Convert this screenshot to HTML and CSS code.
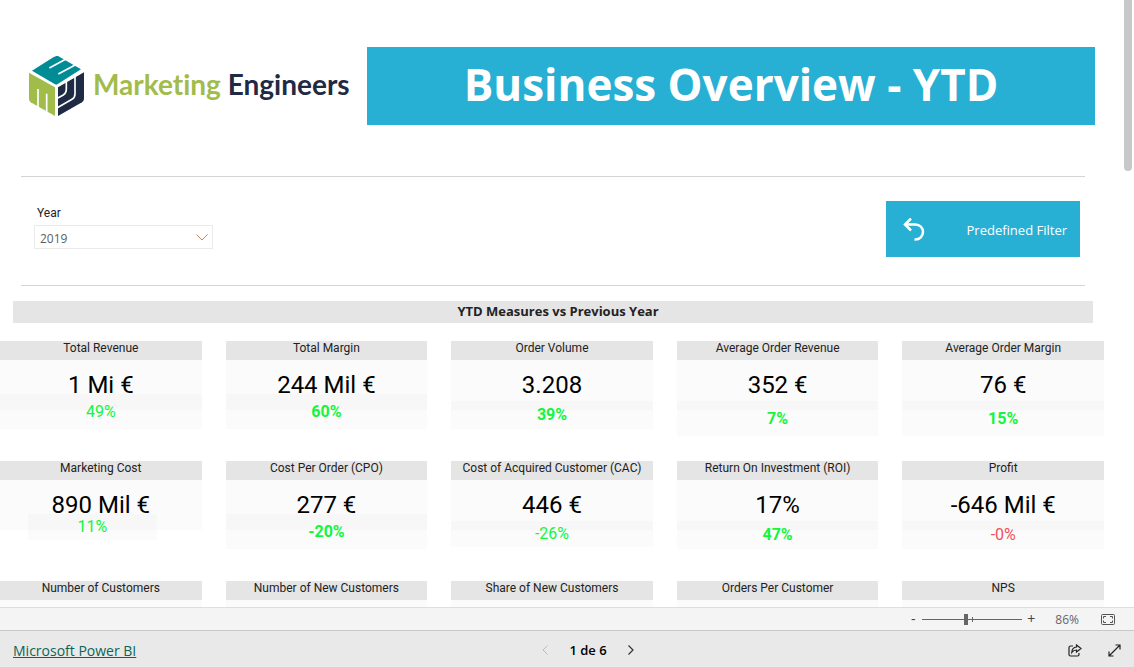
FILE: index.html
```html
<!DOCTYPE html>
<html lang="en">
<head>
<meta charset="utf-8">
<title>Business Overview - YTD</title>
<link rel="stylesheet" href="styles.css">
</head>
<body>
<main class="report">
  <header class="masthead">
    <div class="brand">
      <svg class="brand-mark" viewBox="27 17 165 180" aria-hidden="true">
        <path fill="#008c95" d="M109 17Q113 16 118 19L183 57L112 102Q109 104 105 102L36 61L100 21Z"/>
        <path fill="#a2bc4b" d="M27 67L105 111V197L32 156Q27 152 27 146Z"/>
        <path fill="#1f2a44" d="M192 66L114 111V197L186 156Q192 152 192 146Z"/>
        <g fill="none" stroke="#fff" stroke-width="5">
          <path d="M88 53L145 22M115 71L172 40"/>
          <path d="M54 116V176M80 130V190"/>
          <path d="M139 94V117Q139 129 130 134L112 144M165 79V130Q165 142 156 147L112 172"/>
        </g>
      </svg>
      <div class="brand-name"><span class="brand-first">Marketing</span> Engineers</div>
    </div>
    <h1 class="banner">Business Overview - YTD</h1>
  </header>

  <section class="filters">
    <div class="slicer">
      <label class="slicer-label" for="year">Year</label>
      <div class="slicer-box">
        <select id="year" class="slicer-select"><option>2019</option><option>2018</option></select>
        <svg class="slicer-arrow" viewBox="0 0 12 7" aria-hidden="true"><path d="M.5.5L6 6L11.5.5"/></svg>
      </div>
    </div>
    <button class="preset" type="button">
      <svg class="preset-icon" viewBox="0 0 22 24" aria-hidden="true"><path d="M8 .5L2 6.500L8 12.500M2 6.500H12.500A7.300 7.300 0 0 1 12.500 21.500H11.500"/></svg>
      <span>Predefined Filter</span>
    </button>
  </section>

  <h2 class="section-title">YTD Measures vs Previous Year</h2>

  <section class="cards">
    <article class="card"><h3>Total Revenue</h3><p class="value">1 Mi €</p><p class="delta">49%</p></article>
    <article class="card"><h3>Total Margin</h3><p class="value">244 Mil €</p><p class="delta strong">60%</p></article>
    <article class="card"><h3>Order Volume</h3><p class="value">3.208</p><p class="delta strong low">39%</p></article>
    <article class="card"><h3>Average Order Revenue</h3><p class="value">352 €</p><p class="delta strong low tall">7%</p></article>
    <article class="card"><h3>Average Order Margin</h3><p class="value">76 €</p><p class="delta strong low tall">15%</p></article>

    <article class="card"><h3>Marketing Cost</h3><p class="value">890 Mil €</p><p class="delta short narrow">11%</p></article>
    <article class="card"><h3>Cost Per Order (CPO)</h3><p class="value">277 €</p><p class="delta strong">-20%</p></article>
    <article class="card"><h3>Cost of Acquired Customer (CAC)</h3><p class="value">446 €</p><p class="delta low short">-26%</p></article>
    <article class="card"><h3>Return On Investment (ROI)</h3><p class="value">17%</p><p class="delta strong low">47%</p></article>
    <article class="card"><h3>Profit</h3><p class="value">-646 Mil €</p><p class="delta low negative">-0%</p></article>

    <article class="card"><h3>Number of Customers</h3><p class="value"></p></article>
    <article class="card"><h3>Number of New Customers</h3><p class="value"></p></article>
    <article class="card"><h3>Share of New Customers</h3><p class="value"></p></article>
    <article class="card"><h3>Orders Per Customer</h3><p class="value"></p></article>
    <article class="card"><h3>NPS</h3><p class="value"></p></article>
  </section>
  <div class="scroll-thumb"></div>
</main>

<div class="zoom-bar">
  <button class="plain step" type="button" aria-label="Zoom out">-</button>
  <div class="zoom-track">
    <input class="zoom-range" type="range" min="0" max="100" value="43" aria-label="Zoom level">
    <span class="zoom-tick"></span>
  </div>
  <button class="plain step" type="button" aria-label="Zoom in">+</button>
  <span class="zoom-value">86%</span>
  <button class="plain" type="button" aria-label="Fit to page">
    <svg width="14" height="11" viewBox="0 0 14 11" fill="none" stroke="#555"><rect x=".5" y=".5" width="13" height="10" rx="1"/><path d="M5 2.500H2.500V4.500M2.500 6.500V8.500H5M9 2.500H11.500V4.500M11.500 6.500V8.500H9"/></svg>
  </button>
</div>

<footer class="footer">
  <a class="product" href="#">Microsoft Power BI</a>
  <nav class="pager" aria-label="Pages">
    <button class="plain" type="button" aria-label="Previous page" disabled><svg width="6" height="10" viewBox="0 0 6 10" fill="none" stroke="#bbb"><path d="M5.500.500L1 5L5.500 9.500"/></svg></button>
    <span>1 de 6</span>
    <button class="plain" type="button" aria-label="Next page"><svg width="6" height="10" viewBox="0 0 6 10" fill="none" stroke="#333" stroke-width="1.200"><path d="M.500.500L5 5L.500 9.500"/></svg></button>
  </nav>
  <div class="actions">
    <button class="plain" type="button" aria-label="Share"><svg width="14" height="13" viewBox="0 0 14 13" fill="none" stroke="#222" stroke-width="1.200"><path d="M5 2H2.500Q1 2 1 3.500V10.500Q1 12 2.500 12H9.500Q11 12 11 10.500V9"/><path d="M8.500 1L13 4.500L8.500 8V6Q5.500 6 3.800 8.500Q4 3.500 8.500 3Z"/></svg></button>
    <button class="plain" type="button" aria-label="Full screen"><svg width="13" height="13" viewBox="0 0 13 13" fill="none" stroke="#222" stroke-width="1.200"><path d="M1 12L12 1M7.500 1H12V5.500M1 7.500V12H5.500"/></svg></button>
  </div>
</footer>
</body>
</html>
```
FILE: styles.css
```css
* { box-sizing: border-box; }

body {
  margin: 0;
  height: 100vh;
  display: flex;
  flex-direction: column;
  background: #fff;
  color: #000;
  font-family: "Open Sans", "Noto Sans", sans-serif;
}

h1, h2, h3, p { margin: 0; }

.plain {
  display: flex;
  padding: 0;
  border: 0;
  background: none;
  color: inherit;
  font: inherit;
}

.report {
  position: relative;
  flex: 1;
  min-height: 0;
  overflow: hidden;
}

.masthead {
  display: flex;
  align-items: center;
  margin: 0 49px 0 21px;
  padding: 47px 0 51px;
  border-bottom: 1px solid #d4d4d4;
}

.brand {
  display: flex;
  align-items: center;
  gap: 9px;
  width: 346px;
  padding-left: 8px;
}

.brand-mark { width: 55px; height: 60px; }

.brand-name {
  padding-bottom: 4px;
  color: #1f2a44;
  font: 700 28px/40px Lato, sans-serif;
  font-variant-ligatures: none;
  white-space: nowrap;
}

.brand-first { color: #a2bc4b; }

.banner {
  flex: 1;
  margin-right: -10px;
  padding-bottom: 3px;
  background: #27b0d4;
  color: #fff;
  font-size: 44px;
  font-weight: 700;
  line-height: 75px;
  text-align: center;
}

.filters {
  display: flex;
  justify-content: space-between;
  align-items: flex-start;
  margin: 0 49px 0 21px;
  padding: 24px 5px 28px 13px;
  border-bottom: 1px solid #d4d4d4;
}

.slicer { width: 179px; }

.slicer-label {
  display: block;
  padding: 3px 3px;
  color: #222;
  font: 12px/18px Roboto, sans-serif;
}

.slicer-box { position: relative; }

.slicer-select {
  display: block;
  width: 100%;
  height: 24px;
  padding: 4px 5px 0;
  appearance: none;
  border: 1px solid #eaeaea;
  border-radius: 0;
  background: #fff;
  color: #605e5c;
  font: 12px/18px "Open Sans", sans-serif;
}

.slicer-arrow {
  position: absolute;
  top: 9px;
  right: 5px;
  width: 12px;
  height: 7px;
  fill: none;
  stroke: #c08a60;
  pointer-events: none;
}

.preset {
  display: flex;
  justify-content: space-between;
  align-items: center;
  width: 194px;
  height: 56px;
  padding: 2px 13px 0 17px;
  border: 0;
  background: #27b0d4;
  color: #fff;
  font: 13px/18px "Open Sans", sans-serif;
}

.preset-icon {
  width: 22px;
  height: 24px;
  fill: none;
  stroke: #fff;
  stroke-width: 2.5;
}

.section-title {
  margin: 15px 41px 18px 13px;
  padding: 0 0 2px 10px;
  background: #e5e5e5;
  color: #222;
  font-size: 13px;
  font-weight: 700;
  line-height: 20px;
  text-align: center;
}

.cards {
  display: grid;
  grid-template-columns: repeat(5, 1fr);
  grid-auto-rows: 96px;
  gap: 24px;
  margin-right: 30px;
  font-family: Roboto, sans-serif;
  text-align: center;
}

.card h3 {
  height: 19px;
  background: #e5e5e5;
  color: #222;
  font-size: 12px;
  font-weight: 400;
  line-height: 15px;
  white-space: nowrap;
}

.value {
  height: 50px;
  background: #00000004;
  font-size: 24px;
  line-height: 50px;
}

.delta {
  margin-top: -16px;
  background: #00000004;
  color: #14f53c;
  font-size: 16px;
  line-height: 35px;
}

.strong { font-weight: 700; }
.low { margin-top: -9px; line-height: 28px; }
.tall { line-height: 35px; }
.short { line-height: 26px; }
.narrow { margin-right: 45px; margin-left: 28px; }
.negative { color: #f0505a; }

.scroll-thumb {
  position: absolute;
  top: 0;
  right: 2px;
  width: 8px;
  height: 171px;
  border-radius: 0 0 4px 4px;
  background: #c8c8c8;
}

.zoom-bar {
  display: flex;
  justify-content: flex-end;
  align-items: center;
  height: 23px;
  padding-right: 19px;
  border-top: 1px solid #dedede;
  background: #f4f4f4;
  color: #666;
  font-size: 12px;
}

.step {
  width: 18px;
  justify-content: center;
  color: #444;
  font-size: 14px;
  line-height: 20px;
}

.zoom-track { position: relative; display: flex; width: 100px; }

.zoom-range {
  width: 100%;
  height: 11px;
  margin: 0;
  appearance: none;
  background: linear-gradient(#666, #666) center / 100% 1px no-repeat;
}

.zoom-range::-webkit-slider-thumb {
  appearance: none;
  width: 4px;
  height: 11px;
  background: #666;
}

.zoom-tick {
  position: absolute;
  top: 3px;
  left: 50%;
  width: 1px;
  height: 5px;
  background: #666;
}

.zoom-value { margin: 0 22px 0 15px; }

.footer {
  display: grid;
  grid-template-columns: 1fr auto 1fr;
  align-items: center;
  height: 37px;
  padding: 2px 13px 0;
  border-top: 1px solid #c8c8c8;
  background: #e9e9e9;
  font-size: 13px;
}

.product { color: #0b6556; font-size: 14px; }

.pager { display: flex; align-items: center; gap: 21px; padding-left: 42px; font-weight: 600; }

.actions { display: flex; justify-content: flex-end; align-items: center; gap: 26px; }
```
